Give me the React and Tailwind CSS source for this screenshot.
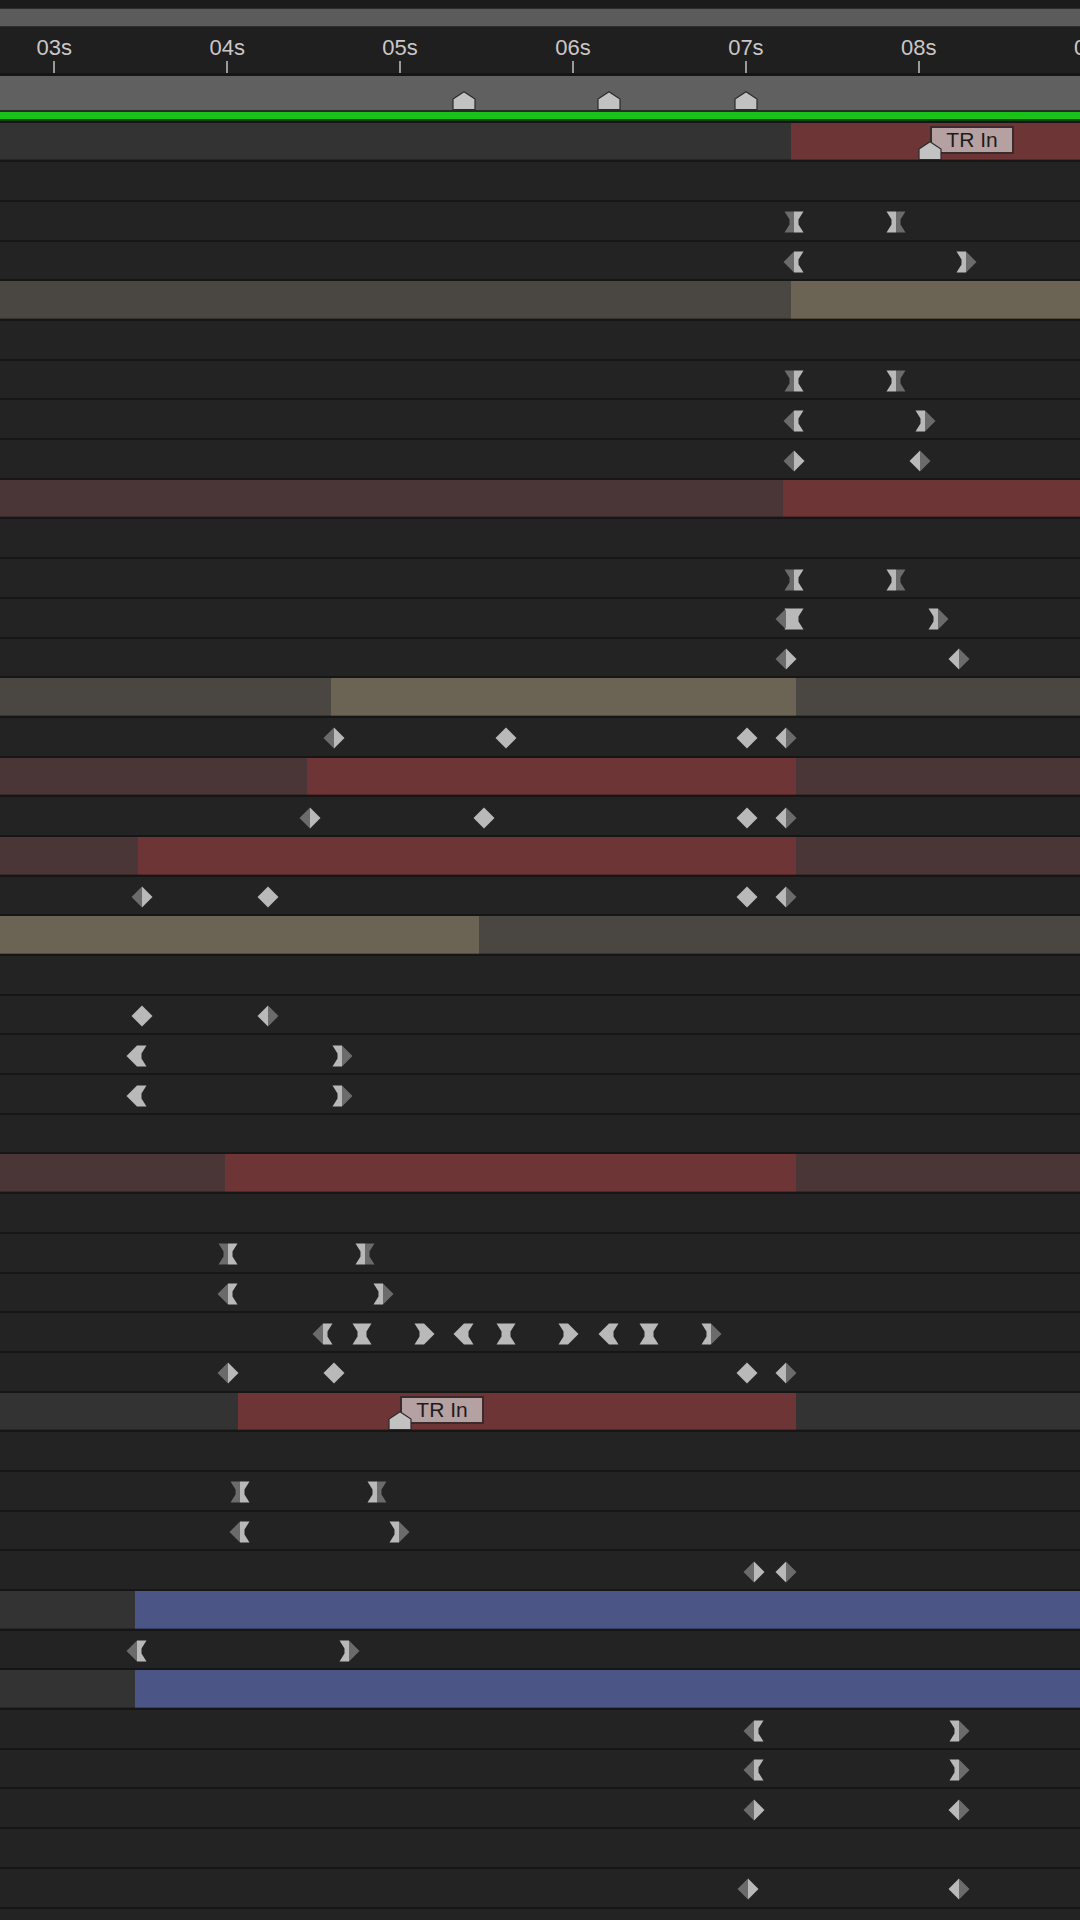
import React from "react";

// timeline ruler: 03s sits at x=54.3, one second = 172.9px
const secX = (s) => 54.3 + (s - 3) * 172.9;
const LABELS = ["03s", "04s", "05s", "06s", "07s", "08s", "09s"];

const LIGHT = "#b9b9b9";
const DARK = "#6b6b6b";

const HALF = {
  DL: "M11 0.5 L0.5 11 L11 21.5 Z",
  DR: "M11 0.5 L21.5 11 L11 21.5 Z",
  HL: "M11 0.5 H1.5 L6.5 8.5 V13.5 L1.5 21.5 H11 Z",
  HR: "M11 0.5 H20.5 L15.5 8.5 V13.5 L20.5 21.5 H11 Z",
};

const SHAPES = {
  D: ["DL", "DR"],
  X: ["HL", "HR"],
  "<": ["DL", "HR"],
  ">": ["HL", "DR"],
};

const BAR = {
  g: "#333333",
  r: "#6e3536",
  rd: "#4b3637",
  t: "#6b6353",
  td: "#4a4641",
  b: "#4b5586",
};

const rows = [
  { bar: [["g", 791], ["r"]], m: 930 },
  {},
  { k: [[794, "X"], [896, "X"]] },
  { k: [[794, "<"], [966, ">"]] },
  { bar: [["td", 791], ["t"]] },
  {},
  { k: [[794, "X"], [896, "X"]] },
  { k: [[794, "<"], [925, ">"]] },
  { k: [[794, "D"], [920, "D"]] },
  { bar: [["rd", 783], ["r"]] },
  {},
  { k: [[794, "X"], [896, "X"]] },
  { k: [[786, "D"], [794, "X"], [938, ">"]] },
  { k: [[786, "D"], [959, "D"]] },
  { bar: [["td", 331], ["t", 465], ["td"]] },
  { k: [[334, "D"], [506, "D"], [747, "D"], [786, "D"]] },
  { bar: [["rd", 307], ["r", 489], ["rd"]] },
  { k: [[310, "D"], [484, "D"], [747, "D"], [786, "D"]] },
  { bar: [["rd", 138], ["r", 658], ["rd"]] },
  { k: [[142, "D"], [268, "D"], [747, "D"], [786, "D"]] },
  { bar: [["t", 479], ["td"]] },
  {},
  { k: [[142, "D"], [268, "D"]], fl: true },
  { k: [[137, "<"], [342, ">"]], fl: true },
  { k: [[137, "<"], [342, ">"]], fl: true },
  {},
  { bar: [["rd", 225], ["r", 571], ["rd"]] },
  {},
  { k: [[228, "X"], [365, "X"]] },
  { k: [[228, "<"], [383, ">"]] },
  {
    k: [
      [323, "<"], [362, "X"], [424, ">"],
      [464, "<"], [506, "X"], [568, ">"],
      [609, "<"], [649, "X"], [711, ">"],
    ],
  },
  { k: [[228, "D"], [334, "D"], [747, "D"], [786, "D"]] },
  { bar: [["g", 238], ["r", 558], ["g"]], m: 400 },
  {},
  { k: [[240, "X"], [377, "X"]] },
  { k: [[240, "<"], [399, ">"]] },
  { k: [[754, "D"], [786, "D"]] },
  { bar: [["g", 135], ["b"]] },
  { k: [[137, "<"], [349, ">"]] },
  { bar: [["g", 135], ["b"]] },
  { k: [[754, "<"], [959, ">"]] },
  { k: [[754, "<"], [959, ">"]] },
  { k: [[754, "D"], [959, "D"]] },
  {},
  { k: [[748, "D"], [959, "D"]] },
  {},
];

const Key = ({ x, t, ld, rd }) => {
  const [l, r] = SHAPES[t];
  return (
    <svg
      className="absolute top-[9.5px]"
      style={{ left: x - 11 }}
      width="22"
      height="22"
      viewBox="0 0 22 22"
    >
      <path d={HALF[l]} fill={ld ? DARK : LIGHT} />
      <path d={HALF[r]} fill={rd ? DARK : LIGHT} />
    </svg>
  );
};

const Marker = ({ className, style }) => (
  <svg className={className} style={style} width="24" height="19" viewBox="0 0 24 19">
    <path
      d="M1 18.5 V8 L12 0.8 L23 8 V18.5 Z"
      fill="#c2c2c2"
      stroke="#2a2a2a"
      strokeWidth="1.2"
    />
  </svg>
);

const Row = ({ row }) => (
  <div className="relative h-[39.7px] shrink-0 border-t-2 border-[#161616] bg-[#232323]">
    {row.bar && (
      <div className="flex h-full">
        {row.bar.map(([c, w], i) => (
          <div
            key={i}
            className={
              "h-full shadow-[inset_0_-1px_0_rgba(0,0,0,0.25)] " +
              (w ? "shrink-0" : "flex-1")
            }
            style={{ backgroundColor: BAR[c], width: w }}
          />
        ))}
      </div>
    )}
    {row.k &&
      row.k.map(([x, t], i) => (
        <Key
          key={i}
          x={x}
          t={t}
          ld={i === 0 && !row.fl}
          rd={i === row.k.length - 1}
        />
      ))}
    {row.m && (
      <>
        <div
          className="absolute top-[3px] flex h-[28px] w-[84px] items-center justify-center border-2 border-[#3a2a2b] bg-[#b5a0a2] text-[21px] leading-none text-[#1c1c1c]"
          style={{ left: row.m }}
        >
          TR In
        </div>
        <Marker className="absolute bottom-0" style={{ left: row.m - 12 }} />
      </>
    )}
  </div>
);

export default function App() {
  return (
    <div className="flex h-[1920px] w-[1080px] flex-col overflow-hidden bg-[#232323] font-['Liberation_Sans',Arial,sans-serif]">
      {/* navigator strip */}
      <div className="h-[8px] shrink-0 bg-[#1b1b1b]" />
      <div className="h-[19px] shrink-0 border-y border-[#2e2e2e] bg-[#5b5b5b]" />

      {/* ruler */}
      <div className="relative h-[49px] shrink-0 border-b-[3px] border-[#151515] bg-[#1f1f1f]">
        {LABELS.map((l, i) => (
          <React.Fragment key={l}>
            <span
              className="absolute top-[10px] -translate-x-1/2 text-[22px] leading-[22px] text-[#cbc7c8]"
              style={{ left: secX(3 + i) }}
            >
              {l}
            </span>
            <div
              className="absolute top-[34px] h-[12px] w-[2px] bg-[#9a9a9a]"
              style={{ left: secX(3 + i) - 1 }}
            />
          </React.Fragment>
        ))}
      </div>

      {/* work area with comp markers */}
      <div className="relative h-[34px] shrink-0 bg-[#606060]">
        {[464, 609, 746].map((x) => (
          <Marker key={x} className="absolute bottom-0" style={{ left: x - 12 }} />
        ))}
      </div>
      <div className="h-[2px] shrink-0 bg-[#2a2a2a]" />
      <div className="h-[7px] shrink-0 bg-[#19c319]" />
      <div className="h-[1.6px] shrink-0 bg-[#0e450e]" />

      {rows.map((row, i) => (
        <Row key={i} row={row} />
      ))}
    </div>
  );
}
